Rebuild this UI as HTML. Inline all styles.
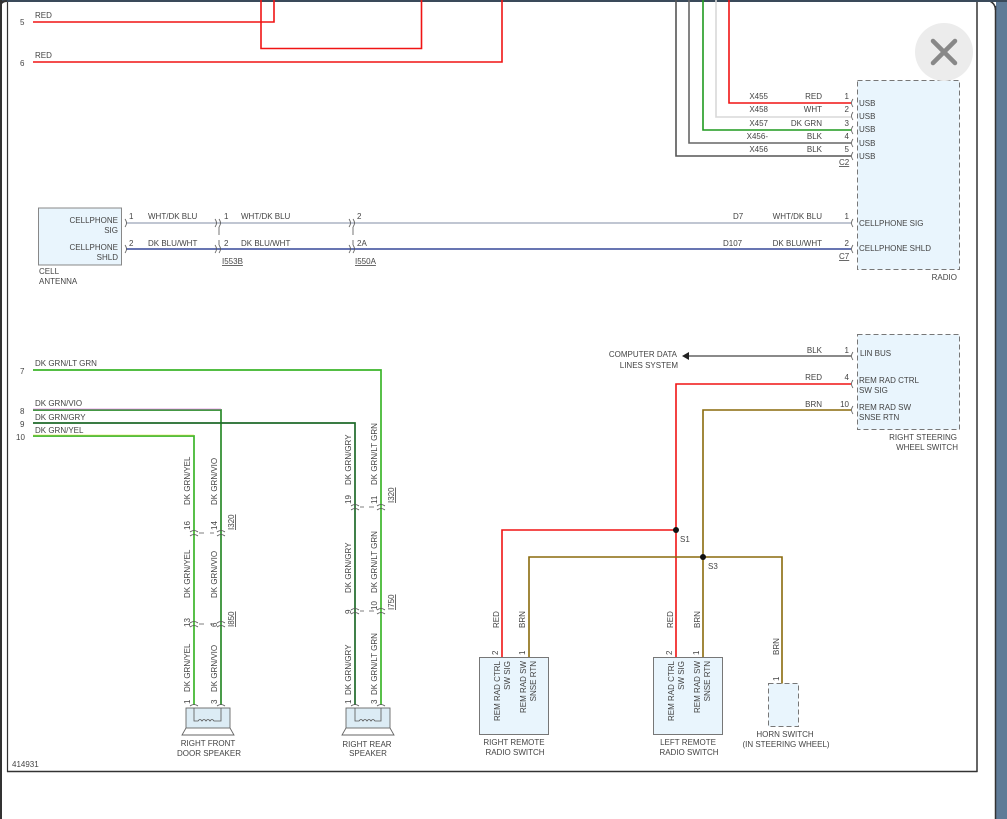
<!DOCTYPE html>
<html><head><meta charset="utf-8"><style>
html,body{margin:0;padding:0;background:#fff;width:1007px;height:819px;overflow:hidden}
svg{display:block}
text{font-family:"Liberation Sans",sans-serif;font-size:8px;fill:#444}
</style></head><body>
<svg width="1007" height="819" viewBox="0 0 1007 819" xmlns="http://www.w3.org/2000/svg">
<rect x="0" y="0" width="1007" height="819" fill="#fff"/>
<!-- outer chrome -->
<rect x="996" y="0" width="11" height="819" fill="#5f7b97"/>
<line x1="995.5" y1="6" x2="995.5" y2="819" stroke="#333" stroke-width="1.5"/>
<path d="M983 0 Q995 0 995.5 10" fill="none" stroke="#333" stroke-width="1.5"/>
<rect x="0" y="0" width="1007" height="2" fill="#3a4a5a"/>
<rect x="0" y="0" width="2" height="819" fill="#333"/>
<path d="M0 8 Q0 1 7 1" fill="none" stroke="#333" stroke-width="2"/>
<!-- diagram frame -->
<line x1="7.5" y1="2" x2="7.5" y2="772" stroke="#333" stroke-width="1.2"/>
<line x1="977" y1="2" x2="977" y2="772" stroke="#333" stroke-width="1.5"/>
<line x1="7" y1="771.5" x2="977.5" y2="771.5" stroke="#333" stroke-width="1.5"/>

<!-- top red wires -->
<g fill="none" stroke="#f01414" stroke-width="1.6">
<path d="M33 22 H274 V0"/>
<path d="M261 0 V48.5 H421.5 V0"/>
<path d="M33 62 H502 V0"/>
</g>
<text x="20" y="25">5</text><text x="35" y="18">RED</text>
<text x="20" y="66">6</text><text x="35" y="58">RED</text>

<!-- USB wires -->
<g fill="none" stroke-width="1.6">
<path d="M676 0 V156 H851" stroke="#555"/>
<path d="M689 0 V143 H851" stroke="#666"/>
<path d="M703 0 V130 H851" stroke="#1f9a1f"/>
<path d="M716 0 V117 H851" stroke="#d8d8d8"/>
<path d="M729 0 V103 H851" stroke="#f01414"/>
</g>
<g text-anchor="end">
<text x="768" y="99">X455</text><text x="822" y="99">RED</text><text x="849" y="99">1</text>
<text x="768" y="112">X458</text><text x="822" y="112">WHT</text><text x="849" y="112">2</text>
<text x="768" y="126">X457</text><text x="822" y="126">DK GRN</text><text x="849" y="126">3</text>
<text x="768" y="139">X456-</text><text x="822" y="139">BLK</text><text x="849" y="139">4</text>
<text x="768" y="152">X456</text><text x="822" y="152">BLK</text><text x="849" y="152">5</text>
</g>
<text x="839" y="165" text-decoration="underline">C2</text>
<rect x="857.5" y="80.5" width="102" height="189" fill="#e9f5fd" stroke="#777" stroke-dasharray="5,3"/>
<g>
<text x="859" y="106">USB</text><text x="859" y="119">USB</text><text x="859" y="132">USB</text><text x="859" y="146">USB</text><text x="859" y="159">USB</text>
<text x="859" y="226">CELLPHONE SIG</text><text x="859" y="251">CELLPHONE SHLD</text>
<text x="957" y="280" text-anchor="end">RADIO</text>
</g>
<g fill="none" stroke="#555" stroke-width="0.8">
<path d="M853 99 q-3 4 0 8"/><path d="M853 112 q-3 4 0 8"/><path d="M853 126 q-3 4 0 8"/><path d="M853 139 q-3 4 0 8"/><path d="M853 152 q-3 4 0 8"/>
<path d="M853 219 q-3 4 0 8"/><path d="M853 245 q-3 4 0 8"/>
</g>

<!-- close button -->
<circle cx="944" cy="52" r="29" fill="#ececec"/>
<path d="M933 41 L955 63 M955 41 L933 63" stroke="#888" stroke-width="4.5" stroke-linecap="round"/>

<!-- cell antenna -->
<rect x="38.5" y="208" width="83" height="57" fill="#e9f5fd" stroke="#888"/>
<g text-anchor="end">
<text x="118" y="223">CELLPHONE</text><text x="118" y="233">SIG</text>
<text x="118" y="250">CELLPHONE</text><text x="118" y="260">SHLD</text>
</g>
<text x="39" y="274">CELL</text><text x="39" y="284">ANTENNA</text>
<line x1="126" y1="223" x2="851" y2="223" stroke="#9ba4b8" stroke-width="1.3"/>
<line x1="126" y1="249" x2="851" y2="249" stroke="#0d2383" stroke-width="1.3"/>
<g fill="none" stroke="#555" stroke-width="0.8">
<path d="M125 219 q3 4 0 8"/><path d="M125 245 q3 4 0 8"/>
<path d="M215 219 q3 4 0 8"/><path d="M219 219 q3 4 0 8"/><path d="M215 245 q3 4 0 8"/><path d="M219 245 q3 4 0 8"/>
<path d="M349 219 q3 4 0 8"/><path d="M353 219 q3 4 0 8"/><path d="M349 245 q3 4 0 8"/><path d="M353 245 q3 4 0 8"/>
<path d="M219 227 v8 M219 240 v5 M353 227 v8 M353 240 v5"/>
</g>
<text x="129" y="219">1</text><text x="148" y="219">WHT/DK BLU</text>
<text x="224" y="219">1</text><text x="241" y="219">WHT/DK BLU</text>
<text x="357" y="219">2</text>
<text x="129" y="246">2</text><text x="148" y="246">DK BLU/WHT</text>
<text x="224" y="246">2</text><text x="241" y="246">DK BLU/WHT</text>
<text x="357" y="246">2A</text>
<text x="222" y="264" text-decoration="underline">I553B</text>
<text x="355" y="264" text-decoration="underline">I550A</text>
<text x="733" y="219">D7</text><text x="822" y="219" text-anchor="end">WHT/DK BLU</text><text x="849" y="219" text-anchor="end">1</text>
<text x="723" y="246">D107</text><text x="822" y="246" text-anchor="end">DK BLU/WHT</text><text x="849" y="246" text-anchor="end">2</text>
<text x="839" y="259" text-decoration="underline">C7</text>

<!-- speaker wires -->
<g fill="none" stroke-width="1.7">
<path d="M33 370 H381 V705" stroke="#3cb52a"/>
<path d="M33 410 H221 V705" stroke="#2a8a2a"/>
<path d="M33 409 H221" stroke="#e080e0" stroke-width="0.7"/>
<path d="M33 423 H355 V705" stroke="#1f6a2a"/>
<path d="M33 436 H194 V705" stroke="#3cb52a"/>
<path d="M33 435 H194" stroke="#d8e040" stroke-width="0.6"/>
</g>
<text x="20" y="374">7</text><text x="35" y="366">DK GRN/LT GRN</text>
<text x="20" y="414">8</text><text x="35" y="406">DK GRN/VIO</text>
<text x="20" y="427">9</text><text x="35" y="420">DK GRN/GRY</text>
<text x="16" y="440">10</text><text x="35" y="433">DK GRN/YEL</text>

<!-- inline connectors vertical -->
<g fill="none" stroke="#555" stroke-width="0.8">
<path d="M190 532 q4 -3 8 0 M190 536 q4 -3 8 0"/><path d="M217 532 q4 -3 8 0 M217 536 q4 -3 8 0"/>
<path d="M190 623 q4 -3 8 0 M190 627 q4 -3 8 0"/><path d="M217 623 q4 -3 8 0 M217 627 q4 -3 8 0"/>
<path d="M351 506 q4 -3 8 0 M351 510 q4 -3 8 0"/><path d="M377 506 q4 -3 8 0 M377 510 q4 -3 8 0"/>
<path d="M351 610 q4 -3 8 0 M351 614 q4 -3 8 0"/><path d="M377 610 q4 -3 8 0 M377 614 q4 -3 8 0"/>
<path d="M199 533 h5 M210 533 h4 M199 624 h5 M210 624 h4 M360 507 h4 M369 507 h5 M360 611 h4 M369 611 h5"/>
<path d="M190 706 q4 -3 8 0 M217 706 q4 -3 8 0 M351 706 q4 -3 8 0 M377 706 q4 -3 8 0"/>
</g>
<g>
<text transform="translate(190,505) rotate(-90)">DK GRN/YEL</text>
<text transform="translate(217,505) rotate(-90)">DK GRN/VIO</text>
<text transform="translate(190,598) rotate(-90)">DK GRN/YEL</text>
<text transform="translate(217,598) rotate(-90)">DK GRN/VIO</text>
<text transform="translate(190,692) rotate(-90)">DK GRN/YEL</text>
<text transform="translate(217,692) rotate(-90)">DK GRN/VIO</text>
<text transform="translate(190,530) rotate(-90)">16</text>
<text transform="translate(217,530) rotate(-90)">14</text>
<text transform="translate(234,530) rotate(-90)" text-decoration="underline">I320</text>
<text transform="translate(190,627) rotate(-90)">13</text>
<text transform="translate(217,627) rotate(-90)">6</text>
<text transform="translate(234,627) rotate(-90)" text-decoration="underline">I850</text>
<text transform="translate(190,704) rotate(-90)">1</text>
<text transform="translate(217,704) rotate(-90)">3</text>

<text transform="translate(351,485) rotate(-90)">DK GRN/GRY</text>
<text transform="translate(377,485) rotate(-90)">DK GRN/LT GRN</text>
<text transform="translate(351,593) rotate(-90)">DK GRN/GRY</text>
<text transform="translate(377,593) rotate(-90)">DK GRN/LT GRN</text>
<text transform="translate(351,695) rotate(-90)">DK GRN/GRY</text>
<text transform="translate(377,695) rotate(-90)">DK GRN/LT GRN</text>
<text transform="translate(351,504) rotate(-90)">19</text>
<text transform="translate(377,504) rotate(-90)">11</text>
<text transform="translate(394,503) rotate(-90)" text-decoration="underline">I320</text>
<text transform="translate(351,614) rotate(-90)">9</text>
<text transform="translate(377,610) rotate(-90)">10</text>
<text transform="translate(394,610) rotate(-90)" text-decoration="underline">I750</text>
<text transform="translate(351,704) rotate(-90)">1</text>
<text transform="translate(377,704) rotate(-90)">3</text>
</g>
<!-- speakers -->
<g stroke="#666" stroke-width="0.9" fill="#dcecf5">
<rect x="186" y="708" width="44" height="20"/>
<path d="M186 728 L182 735 H234 L230 728" fill="none"/>
<rect x="346" y="708" width="44" height="20"/>
<path d="M346 728 L342 735 H394 L390 728" fill="none"/>
</g>
<g fill="none" stroke="#555" stroke-width="0.8">
<path d="M194 708 v13 h4 q2 -3 4 0 q2 -3 4 0 q2 -3 4 0 q2 -3 4 0 h7 v-13"/>
<path d="M355 708 v13 h4 q2 -3 4 0 q2 -3 4 0 q2 -3 4 0 q2 -3 4 0 h6 v-13"/>
</g>
<g text-anchor="middle">
<text x="208" y="746">RIGHT FRONT</text><text x="209" y="756">DOOR SPEAKER</text>
<text x="367" y="747">RIGHT REAR</text><text x="368" y="756">SPEAKER</text>
</g>
<text x="12" y="767">414931</text>

<!-- steering switch -->
<rect x="857.5" y="334.5" width="102" height="95" fill="#e9f5fd" stroke="#777" stroke-dasharray="5,3"/>
<text x="860" y="356">LIN BUS</text>
<text x="859" y="383">REM RAD CTRL</text><text x="859" y="393">SW SIG</text>
<text x="859" y="410">REM RAD SW</text><text x="859" y="420">SNSE RTN</text>
<text x="957" y="440" text-anchor="end">RIGHT STEERING</text><text x="958" y="450" text-anchor="end">WHEEL SWITCH</text>
<g fill="none" stroke="#555" stroke-width="0.8">
<path d="M853 352 q-3 4 0 8"/><path d="M853 380 q-3 4 0 8"/><path d="M853 406 q-3 4 0 8"/>
</g>
<line x1="688" y1="356" x2="851" y2="356" stroke="#444" stroke-width="1.3"/>
<path d="M682 356 L689 352 L689 360 Z" fill="#222"/>
<text x="677" y="357" text-anchor="end">COMPUTER DATA</text><text x="678" y="368" text-anchor="end">LINES SYSTEM</text>
<text x="822" y="353" text-anchor="end">BLK</text><text x="849" y="353" text-anchor="end">1</text>
<text x="822" y="380" text-anchor="end">RED</text><text x="849" y="380" text-anchor="end">4</text>
<text x="822" y="407" text-anchor="end">BRN</text><text x="849" y="407" text-anchor="end">10</text>
<g fill="none" stroke-width="1.6">
<path d="M851 384 H676 V658" stroke="#f01414"/>
<path d="M676 530 H502 V658" stroke="#f01414"/>
<path d="M851 410 H703 V658" stroke="#8a6a0c"/>
<path d="M529 658 V557 H782 V684" stroke="#8a6a0c"/>
</g>
<circle cx="676" cy="530" r="3" fill="#111"/><circle cx="703" cy="557" r="3" fill="#111"/>
<text x="680" y="542">S1</text><text x="708" y="569">S3</text>
<g fill="none" stroke="#555" stroke-width="0.8">
<path d="M498 660 q4 -3 8 0"/><path d="M525 660 q4 -3 8 0"/><path d="M672 660 q4 -3 8 0"/><path d="M699 660 q4 -3 8 0"/><path d="M778 686 q4 -3 8 0"/>
</g>
<g>
<text transform="translate(499,628) rotate(-90)">RED</text>
<text transform="translate(525,628) rotate(-90)">BRN</text>
<text transform="translate(673,628) rotate(-90)">RED</text>
<text transform="translate(700,628) rotate(-90)">BRN</text>
<text transform="translate(779,655) rotate(-90)">BRN</text>
<text transform="translate(498,655) rotate(-90)">2</text>
<text transform="translate(525,655) rotate(-90)">1</text>
<text transform="translate(672,655) rotate(-90)">2</text>
<text transform="translate(699,655) rotate(-90)">1</text>
<text transform="translate(779,681) rotate(-90)">1</text>
</g>
<rect x="479.5" y="657.5" width="69" height="77" fill="#e9f5fd" stroke="#777"/>
<rect x="653.5" y="657.5" width="69" height="77" fill="#e9f5fd" stroke="#777"/>
<rect x="768.5" y="683.5" width="30" height="43" fill="#e9f5fd" stroke="#777" stroke-dasharray="5,3"/>
<g text-anchor="end">
<text transform="translate(500,661) rotate(-90)">REM RAD CTRL</text>
<text transform="translate(510,661) rotate(-90)">SW SIG</text>
<text transform="translate(526,661) rotate(-90)">REM RAD SW</text>
<text transform="translate(536,661) rotate(-90)">SNSE RTN</text>
<text transform="translate(674,661) rotate(-90)">REM RAD CTRL</text>
<text transform="translate(684,661) rotate(-90)">SW SIG</text>
<text transform="translate(700,661) rotate(-90)">REM RAD SW</text>
<text transform="translate(710,661) rotate(-90)">SNSE RTN</text>
</g>
<g text-anchor="middle">
<text x="514" y="745">RIGHT REMOTE</text><text x="515" y="755">RADIO SWITCH</text>
<text x="688" y="745">LEFT REMOTE</text><text x="689" y="755">RADIO SWITCH</text>
<text x="785" y="737">HORN SWITCH</text><text x="786" y="747">(IN STEERING WHEEL)</text>
</g>
</svg>
</body></html>
